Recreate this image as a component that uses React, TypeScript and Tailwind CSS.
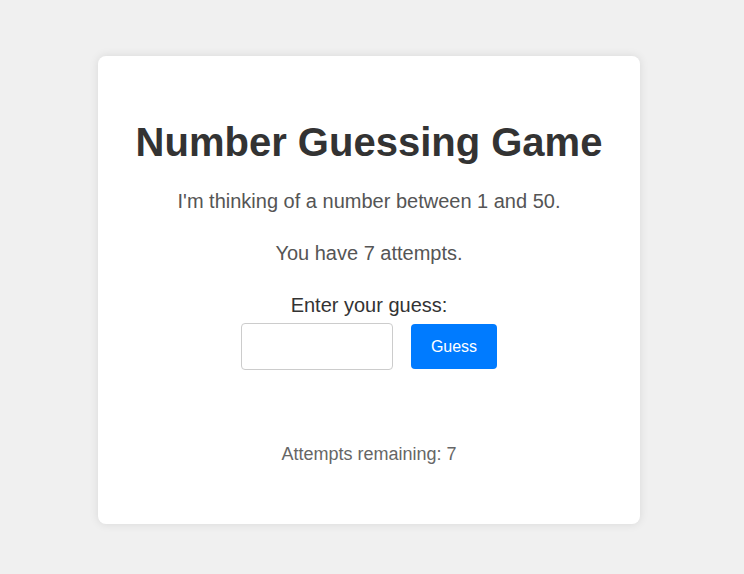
import React from "react";

export default function App() {
  return (
    <div
      className="min-h-[574px] w-full bg-[#f0f0f0] pt-[56px] pl-[98px]"
      style={{ fontFamily: '"Liberation Sans", Arial, sans-serif' }}
    >
      <div className="w-[542px] h-[468px] bg-white rounded-[8px] shadow-[0_0_10px_rgba(0,0,0,0.1)] pt-[62px] flex flex-col items-center text-center">
        <h1 className="text-[40px] leading-[48px] font-bold text-[#333]">Number Guessing Game</h1>
        <p className="mt-[23px] text-[20px] leading-[24px] text-[#555]">
          I'm thinking of a number between 1 and 50.
        </p>
        <p className="mt-[28px] text-[20px] leading-[24px] text-[#555]">You have 7 attempts.</p>
        <label className="mt-[28px] text-[20px] leading-[24px] text-[#333]">Enter your guess:</label>
        <div className="mt-[6px] flex items-center gap-[18px]">
          <input
            type="number"
            className="w-[152px] h-[47px] border border-[#ccc] rounded-[4px] bg-white outline-none px-2"
          />
          <button className="w-[86px] h-[45px] bg-[#007bff] text-white text-[16px] rounded-[4px]">
            Guess
          </button>
        </div>
        <p className="mt-[73px] text-[18px] leading-[22px] text-[#666]">Attempts remaining: 7</p>
      </div>
    </div>
  );
}
